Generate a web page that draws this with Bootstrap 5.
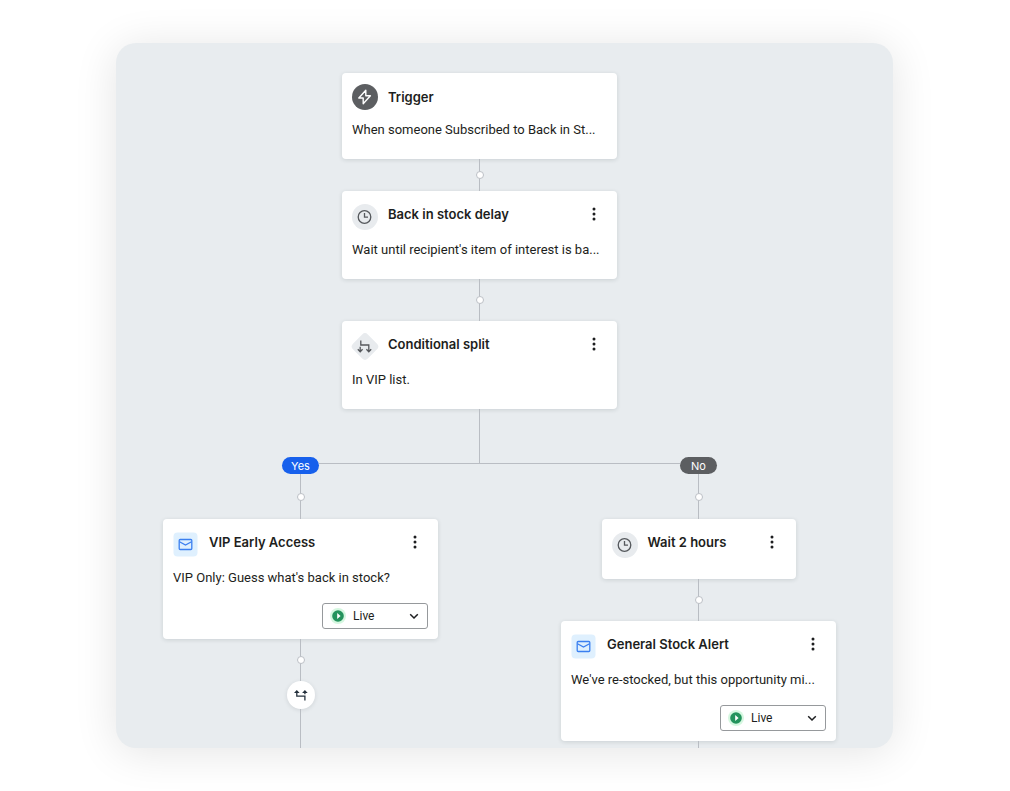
<!DOCTYPE html>
<html lang="en">
<head>
<meta charset="utf-8">
<meta name="viewport" content="width=device-width, initial-scale=1">
<title>Back in stock flow</title>
<link rel="stylesheet" href="https://cdn.jsdelivr.net/npm/bootstrap@5.3.0/dist/css/bootstrap.min.css">
<style>
  body { font-family: Inter, "Liberation Sans", sans-serif; font-size: 13px; line-height: 20px; color: #1d1e20; background: #fff; }
  .page { padding: 43px 117px 43px 116px; }
  .flow-canvas { background: #e8ecef; border-radius: 20px; box-shadow: 0 4px 44px rgba(0,0,0,.11); padding-top: 30px; }
  .trunk { padding-right: 50px; }
  .split-bar { padding: 0 176px 0 166px; }
  .branches { padding: 0 57px 0 47px; }
  .branch { width: 275px; }
  .step { width: 275px; padding: 13px 10px 19px; background: #fff; border-radius: 4px; box-shadow: 0 1px 4px rgba(30,40,50,.14); }
  .step-trigger { padding-top: 11px; }
  .step-email { padding-bottom: 10px; }
  .step-small { width: 194px; height: 60px; }
  .step-head { height: 26px; gap: 10px; }
  .step-head h2 { font-size: 13px; line-height: 20px; font-weight: 600; }
  .step-icon { width: 26px; height: 26px; flex: none; }
  .step-text { margin: 10px 0 0; font-family: Roboto, "Liberation Sans", sans-serif; white-space: nowrap; }
  .kebab { width: 27px; height: 20px; line-height: 0; color: #1d1e20; }
  .link-line { position: relative; width: 1px; background: #b9bdc3; flex: none; }
  .link-line.dot::after { content: ""; position: absolute; left: 50%; top: 50%; width: 8px; height: 8px; border: 1px solid #bcc0c6; border-radius: 50%; background: #fff; transform: translate(-50%, -50%); }
  .h-short { height: 32px; }
  .h-mid { height: 42px; }
  .h-branch { height: 45px; }
  .h-stem { height: 54px; margin-bottom: -6px; }
  .h-tail { height: 7px; }
  .pill { width: 37px; height: 17px; font-size: 11px; line-height: 18px; text-align: center; color: #fff; border-radius: 9px; }
  .pill-yes { background: #1760ec; }
  .pill-no { background: #5c5e61; }
  .cross-line { height: 1px; margin-top: 6px; background: #b9bdc3; }
  .status { width: 106px; height: 26px; margin-top: 15px; padding-left: 7px; border: 1px solid #96999c; border-radius: 3px; }
  .status select { height: 24px; padding: 0 24px 0 7px; border: 0; font-family: Roboto, "Liberation Sans", sans-serif; font-size: 12px; line-height: 24px; color: #1d1e20; background-color: transparent; background-size: 10px; background-position: right 8px center;
    background-image: url("data:image/svg+xml,%3Csvg xmlns='http://www.w3.org/2000/svg' viewBox='0 0 10 10'%3E%3Cpath d='M1.2 3.2 5 7l3.800-3.800' fill='none' stroke='%231d1e20' stroke-width='1.500'/%3E%3C/svg%3E"); }
  .merge { width: 28px; height: 28px; background: #fff; border-radius: 50%; box-shadow: 0 1px 4px rgba(30,40,50,.12); }
</style>
</head>
<body>
<svg class="d-none" aria-hidden="true">
  <symbol id="i-dots" viewBox="0 0 4 14"><circle cx="2" cy="2" r="1.500"/><circle cx="2" cy="7" r="1.500"/><circle cx="2" cy="12" r="1.500"/></symbol>
  <symbol id="i-clock" viewBox="0 0 26 26"><circle cx="13" cy="13" r="13" fill="#e8ebee"/><circle cx="12.500" cy="13" r="6.300" fill="none" stroke="#55585c" stroke-width="1.300"/><path d="M12.500 9v4.200H16" fill="none" stroke="#55585c" stroke-width="1.300"/></symbol>
  <symbol id="i-mail" viewBox="0 0 26 26"><rect x="0.500" y="0.500" width="24" height="24" rx="4" fill="#dff0fe"/><rect x="6.200" y="7.500" width="12.600" height="10" rx="1" fill="none" stroke="#3b7ff0" stroke-width="1.300"/><path d="M6.500 9.800l6 3.200 6-3.200" fill="none" stroke="#3b7ff0" stroke-width="1.300"/></symbol>
  <symbol id="i-live" viewBox="0 0 16 16"><circle cx="8" cy="8" r="8" fill="#d5f7e0"/><circle cx="8" cy="8" r="5.800" fill="#23935c"/><path d="M7.200 4.900 10.600 8l-3.400 3.100z" fill="#fff"/></symbol>
</svg>

<main class="page">
  <div class="flow-canvas">
    <section class="trunk d-flex flex-column align-items-center">
      <article class="step step-trigger">
        <div class="step-head d-flex align-items-center">
          <svg class="step-icon" viewBox="0 0 26 26" aria-hidden="true"><circle cx="13" cy="13" r="13" fill="#5c5e61"/><path d="M13.800 6.200 6.800 14h4.400v5.700l7.200-8h-4.600z" fill="none" stroke="#fff" stroke-width="1.400" stroke-linejoin="round"/></svg>
          <h2 class="m-0">Trigger</h2>
        </div>
        <p class="step-text">When someone Subscribed to Back in St...</p>
      </article>
      <div class="link-line dot h-short"></div>

      <article class="step">
        <div class="step-head d-flex align-items-start">
          <svg class="step-icon" aria-hidden="true"><use href="#i-clock"/></svg>
          <h2 class="m-0 flex-grow-1">Back in stock delay</h2>
          <button type="button" class="kebab btn border-0 p-0" aria-label="Back in stock delay options"><svg width="4" height="14" fill="currentColor"><use href="#i-dots"/></svg></button>
        </div>
        <p class="step-text">Wait until recipient's item of interest is ba...</p>
      </article>
      <div class="link-line dot h-mid"></div>

      <article class="step">
        <div class="step-head d-flex align-items-start">
          <svg class="step-icon overflow-visible" viewBox="0 0 26 26" aria-hidden="true"><rect x="2.500" y="2" width="21" height="21" rx="4" transform="rotate(45 13 12.500)" fill="#e8ebee"/><path d="M8.800 6.500v4.500h8v6.500M8.200 12.800v4.700M5.800 15.200l2.400 2.500 2.400-2.500M14.400 15.200l2.400 2.500 2.400-2.500" fill="none" stroke="#55585c" stroke-width="1.300"/></svg>
          <h2 class="m-0 flex-grow-1">Conditional split</h2>
          <button type="button" class="kebab btn border-0 p-0" aria-label="Conditional split options"><svg width="4" height="14" fill="currentColor"><use href="#i-dots"/></svg></button>
        </div>
        <p class="step-text">In VIP list.</p>
      </article>
      <div class="link-line h-stem"></div>
    </section>

    <div class="split-bar d-flex">
      <span class="pill pill-yes">Yes</span>
      <div class="cross-line flex-grow-1"></div>
      <span class="pill pill-no">No</span>
    </div>

    <div class="branches d-flex justify-content-between">
      <section class="branch d-flex flex-column align-items-center">
        <div class="link-line dot h-branch"></div>
        <article class="step step-email">
          <div class="step-head d-flex align-items-start">
            <svg class="step-icon" aria-hidden="true"><use href="#i-mail"/></svg>
            <h2 class="m-0 flex-grow-1">VIP Early Access</h2>
            <button type="button" class="kebab btn border-0 p-0" aria-label="VIP Early Access options"><svg width="4" height="14" fill="currentColor"><use href="#i-dots"/></svg></button>
          </div>
          <p class="step-text">VIP Only: Guess what's back in stock?</p>
          <div class="status d-flex align-items-center ms-auto">
            <svg class="flex-shrink-0" width="16" height="16" aria-hidden="true"><use href="#i-live"/></svg>
            <select class="form-select shadow-none" aria-label="VIP Early Access status"><option>Live</option></select>
          </div>
        </article>
        <div class="link-line dot h-mid"></div>
        <div class="merge d-flex align-items-center justify-content-center flex-shrink-0">
          <svg width="14" height="12" viewBox="0 0 14 12" aria-hidden="true"><path d="M2.800 2.500v4.600h8.100v4.400M10.900 3v2.200" fill="none" stroke="#24303c" stroke-width="1.300"/><path d="M0 4 2.800 1l2.800 3zM8.100 4l2.800-3 2.800 3z" fill="#24303c"/></svg>
        </div>
        <div class="link-line flex-grow-1"></div>
      </section>

      <section class="branch d-flex flex-column align-items-center">
        <div class="link-line dot h-branch"></div>
        <article class="step step-small">
          <div class="step-head d-flex align-items-start">
            <svg class="step-icon" aria-hidden="true"><use href="#i-clock"/></svg>
            <h2 class="m-0 flex-grow-1">Wait 2 hours</h2>
            <button type="button" class="kebab btn border-0 p-0" aria-label="Wait 2 hours options"><svg width="4" height="14" fill="currentColor"><use href="#i-dots"/></svg></button>
          </div>
        </article>
        <div class="link-line dot h-mid"></div>
        <article class="step step-email">
          <div class="step-head d-flex align-items-start">
            <svg class="step-icon" aria-hidden="true"><use href="#i-mail"/></svg>
            <h2 class="m-0 flex-grow-1">General Stock Alert</h2>
            <button type="button" class="kebab btn border-0 p-0" aria-label="General Stock Alert options"><svg width="4" height="14" fill="currentColor"><use href="#i-dots"/></svg></button>
          </div>
          <p class="step-text">We've re-stocked, but this opportunity mi...</p>
          <div class="status d-flex align-items-center ms-auto">
            <svg class="flex-shrink-0" width="16" height="16" aria-hidden="true"><use href="#i-live"/></svg>
            <select class="form-select shadow-none" aria-label="General Stock Alert status"><option>Live</option></select>
          </div>
        </article>
        <div class="link-line h-tail"></div>
      </section>
    </div>
  </div>
</main>
<script src="https://cdn.jsdelivr.net/npm/bootstrap@5.3.0/dist/js/bootstrap.bundle.min.js"></script>
</body>
</html>
